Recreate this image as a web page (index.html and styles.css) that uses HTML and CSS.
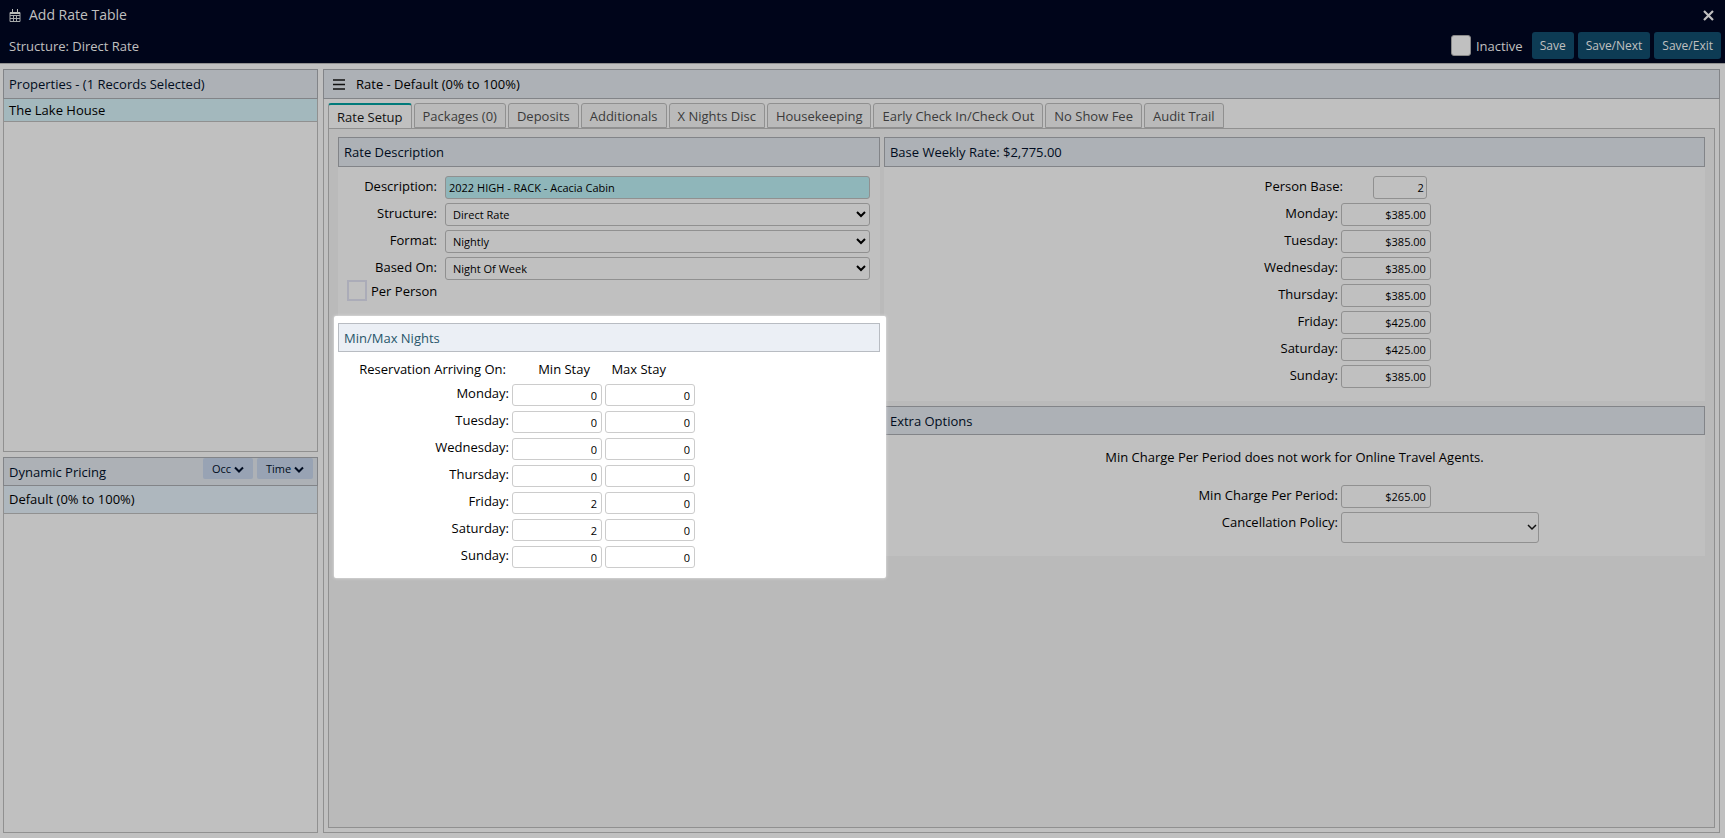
FILE: index.html
```html
<!DOCTYPE html>
<html lang="en">
<head>
  <meta charset="UTF-8">
  <title>Add Rate Table</title>
  <link rel="stylesheet" href="styles.css">
</head>
<body>

  <header class="topbar">
    <div class="title-row">
      <svg class="calendar" viewBox="0 0 12 13" width="12" height="13">
        <path d="M1 3.500h10v9h-10z M1 6.500h10 M1 9.500h10 M4.500 6v6.500 M7.500 6v6.500" fill="none" stroke="#a4a8a8" stroke-width="1"/>
        <path d="M1 3h10v2h-10z M3 0h1v4h-1z M8 0h1v4h-1z" fill="#b8bbb8"/>
      </svg>
      <h1>Add Rate Table</h1>
      <button class="close" aria-label="Close">
        <svg viewBox="0 0 11 11" width="11" height="11"><path d="M1 1l9 9M10 1l-9 9" stroke="#c0c0c0" stroke-width="2.200"/></svg>
      </button>
    </div>
    <div class="action-row">
      <span class="structure">Structure: Direct Rate</span>
      <label class="inactive"><input type="checkbox"> Inactive</label>
      <button class="save">Save</button>
      <button class="save">Save/Next</button>
      <button class="save">Save/Exit</button>
    </div>
  </header>

  <main class="layout">
    <aside class="sidebar">
      <section class="panel properties">
        <h2 class="bar">Properties - (1 Records Selected)</h2>
        <div class="item selected">The Lake House</div>
      </section>
      <section class="panel pricing">
        <h2 class="bar">Dynamic Pricing
          <span class="bar-buttons">
            <button>Occ <svg viewBox="0 0 10 7" width="10" height="7"><path d="M1 1.500l4 4l4-4" fill="none" stroke="#000c20" stroke-width="2"/></svg></button>
            <button>Time <svg viewBox="0 0 10 7" width="10" height="7"><path d="M1 1.500l4 4l4-4" fill="none" stroke="#000c20" stroke-width="2"/></svg></button>
          </span>
        </h2>
        <div class="item default">Default (0% to 100%)</div>
      </section>
    </aside>

    <section class="panel rate">
      <h2 class="bar">
        <svg class="menu" viewBox="0 0 12 11" width="12" height="11"><path d="M0 1h12M0 5.500h12M0 10h12" stroke="#111" stroke-width="1.600"/></svg>
        Rate - Default (0% to 100%)
      </h2>

      <nav class="tabs">
        <button class="active">Rate Setup</button>
        <button>Packages (0)</button>
        <button>Deposits</button>
        <button>Additionals</button>
        <button>X Nights Disc</button>
        <button>Housekeeping</button>
        <button>Early Check In/Check Out</button>
        <button>No Show Fee</button>
        <button>Audit Trail</button>
      </nav>

      <div class="tab-content">
        <div class="column">
          <section class="box description">
            <h3 class="bar">Rate Description</h3>
            <div class="form">
              <div class="row">
                <label for="description">Description:</label>
                <input class="filled" id="description" type="text" value="2022 HIGH - RACK - Acacia Cabin">
              </div>
              <div class="row">
                <label for="structure">Structure:</label>
                <select id="structure"><option>Direct Rate</option></select>
              </div>
              <div class="row">
                <label for="format">Format:</label>
                <select id="format"><option>Nightly</option></select>
              </div>
              <div class="row">
                <label for="based">Based On:</label>
                <select id="based"><option>Night Of Week</option></select>
              </div>
              <label class="per-person"><input type="checkbox"> Per Person</label>
            </div>
          </section>

          <div class="nights-wrap">
            <section class="nights">
              <h3 class="bar">Min/Max Nights</h3>
              <table>
                <thead>
                  <tr><th>Reservation Arriving On:</th><th>Min Stay</th><th>Max Stay</th></tr>
                </thead>
                <tbody>
                  <tr><th>Monday:</th><td><input type="text" aria-label="Monday min" value="0"></td><td><input type="text" aria-label="Monday max" value="0"></td></tr>
                  <tr><th>Tuesday:</th><td><input type="text" aria-label="Tuesday min" value="0"></td><td><input type="text" aria-label="Tuesday max" value="0"></td></tr>
                  <tr><th>Wednesday:</th><td><input type="text" aria-label="Wednesday min" value="0"></td><td><input type="text" aria-label="Wednesday max" value="0"></td></tr>
                  <tr><th>Thursday:</th><td><input type="text" aria-label="Thursday min" value="0"></td><td><input type="text" aria-label="Thursday max" value="0"></td></tr>
                  <tr><th>Friday:</th><td><input type="text" aria-label="Friday min" value="2"></td><td><input type="text" aria-label="Friday max" value="0"></td></tr>
                  <tr><th>Saturday:</th><td><input type="text" aria-label="Saturday min" value="2"></td><td><input type="text" aria-label="Saturday max" value="0"></td></tr>
                  <tr><th>Sunday:</th><td><input type="text" aria-label="Sunday min" value="0"></td><td><input type="text" aria-label="Sunday max" value="0"></td></tr>
                </tbody>
              </table>
            </section>
          </div>
        </div>

        <div class="column">
          <section class="box base-rate">
            <h3 class="bar">Base Weekly Rate: $2,775.00</h3>
            <div class="form">
              <div class="row person"><label for="person">Person Base:</label><input id="person" type="text" value="2"></div>
              <div class="row"><label for="mon">Monday:</label><input id="mon" type="text" value="$385.00"></div>
              <div class="row"><label for="tue">Tuesday:</label><input id="tue" type="text" value="$385.00"></div>
              <div class="row"><label for="wed">Wednesday:</label><input id="wed" type="text" value="$385.00"></div>
              <div class="row"><label for="thu">Thursday:</label><input id="thu" type="text" value="$385.00"></div>
              <div class="row"><label for="fri">Friday:</label><input id="fri" type="text" value="$425.00"></div>
              <div class="row"><label for="sat">Saturday:</label><input id="sat" type="text" value="$425.00"></div>
              <div class="row"><label for="sun">Sunday:</label><input id="sun" type="text" value="$385.00"></div>
            </div>
          </section>

          <section class="box extra">
            <h3 class="bar">Extra Options</h3>
            <p>Min Charge Per Period does not work for Online Travel Agents.</p>
            <div class="form">
              <div class="row"><label for="charge">Min Charge Per Period:</label><input id="charge" type="text" value="$265.00"></div>
              <div class="row"><label for="policy">Cancellation Policy:</label><select id="policy"><option></option></select></div>
            </div>
          </section>
        </div>
      </div>
    </section>
  </main>

</body>
</html>
```
FILE: styles.css
```css
* {
  box-sizing: border-box;
}
body {
  margin: 0;
  min-height: 100vh;
  display: flex;
  flex-direction: column;
  background: #c0c0c0;
  color: #000;
  font-family: "Open Sans", sans-serif;
  font-size: 13px;
  line-height: 18px;
}
h1, h2, h3, p {
  margin: 0;
  font-size: 13px;
  font-weight: normal;
}
button, input, select {
  font-family: inherit;
  font-size: 11px;
  margin: 0;
}

/* top bar */
.topbar {
  background: #00051a;
  color: #c0c0c0;
  height: 64px;
  padding: 0 4px 0 9px;
  border-bottom: 1px solid #909090;
}
.title-row {
  display: flex;
  align-items: center;
  gap: 8px;
  height: 30px;
}
.title-row h1 {
  flex: 1;
  font-size: 14px;
}
.close {
  display: flex;
  padding: 0;
  margin-right: 7px;
  border: 0;
  background: none;
}
.action-row {
  display: flex;
  align-items: center;
  gap: 4px;
  height: 31px;
}
.structure {
  flex: 1;
}
.inactive {
  display: flex;
  align-items: center;
  gap: 5px;
  margin-right: 5px;
}
.inactive input {
  appearance: none;
  width: 20px;
  height: 21px;
  border: 1px solid #888;
  border-radius: 3px;
  background: #c0c0c0;
}
.save {
  height: 27px;
  padding: 0 8px;
  border: 0;
  border-radius: 3px;
  background: #0d3b54;
  color: #c0c0c0;
  font-size: 12px;
}

/* panels */
.layout {
  flex: 1;
  display: flex;
  gap: 5px;
  padding: 5px 5px 5px 3px;
}
.sidebar {
  flex: 0 0 315px;
  display: flex;
  flex-direction: column;
  gap: 5px;
}
.panel {
  display: flex;
  flex-direction: column;
  border: 1px solid #909090;
}
.properties {
  flex: 51 1 0;
}
.pricing {
  flex: 50 1 0;
}
.rate {
  flex: 1;
}
.bar {
  display: flex;
  align-items: center;
  height: 30px;
  padding: 0 5px;
  border: 1px solid #828488;
  background: #adb1b6;
  color: #000c20;
}
.panel > .bar {
  margin: -1px -1px 0;
}
.rate > .bar {
  gap: 11px;
  padding-left: 9px;
  color: #000;
}
.pricing > .bar {
  justify-content: space-between;
  height: 29px;
  padding-right: 4px;
}
.bar-buttons {
  display: flex;
  align-self: flex-start;
  gap: 4px;
}
.bar-buttons button {
  height: 21px;
  padding: 0 9px;
  border: 0;
  border-radius: 2px;
  background: #98a3b4;
  color: #000c20;
}
.item {
  padding: 2px 5px;
  border-bottom: 1px solid #909090;
}
.selected {
  background: #a3b8bd;
}
.default {
  padding: 4px 5px 5px;
  background: #aeb7be;
}

/* tabs */
.tabs {
  display: flex;
  gap: 2px;
  padding: 4px 4px 0;
}
.tabs button {
  height: 25px;
  padding: 0 8px;
  border: 1px solid #909090;
  border-radius: 3px 3px 0 0;
  background: #bababa;
  color: #3a3a3a;
  font-size: 13px;
}
.tabs .active {
  border-top: 2px solid #007a7a;
  border-bottom: 0;
  background: #c0c0c0;
  color: #111;
}
.tab-content {
  flex: 1;
  display: grid;
  grid-template-columns: 66fr 100fr;
  gap: 4px;
  margin: 0 4px 4px;
  padding: 8px 9px 0;
  border: 1px solid #909090;
  background: #bababa;
}
.column {
  display: flex;
  flex-direction: column;
}

/* forms */
.box {
  background: #c0c0c0;
}
.form {
  display: flex;
  flex-direction: column;
  gap: 4px;
  padding-top: 9px;
}
.row {
  display: flex;
  height: 23px;
}
.row label {
  padding-top: 1px;
  text-align: right;
}
.row input, .row select, .nights input {
  border: 1px solid #909090;
  border-radius: 3px;
  background-color: #c0c0c0;
  color: #000;
}
.description {
  height: 179px;
}
.description .row {
  gap: 8px;
  padding-right: 10px;
}
.description .row label {
  flex: 0 0 99px;
}
.description .row input, .description .row select {
  flex: 1;
  padding: 0 3px;
}
.description .row .filled {
  background: #8fb6ba;
}
.per-person {
  display: flex;
  align-items: center;
  gap: 4px;
  margin-top: -4px;
  padding-left: 9px;
}
.per-person input {
  appearance: none;
  width: 20px;
  height: 21px;
  border: 2px solid #abacb8;
}

/* highlighted section, spills slightly over the next column */
.nights-wrap {
  position: relative;
  margin: 0 -6px 0 -4px;
}
.nights {
  height: 262px;
  padding: 7px 6px 0 4px;
  border-radius: 2px;
  background: #fff;
  box-shadow: 0 0 3px #e8e8e8;
}
.nights .bar {
  height: 29px;
  border-color: #b8bcc2;
  background: #ebeff5;
  color: #28566b;
}
.nights table {
  margin-top: 8px;
  border-spacing: 0;
}
.nights th, .nights td {
  padding: 0 3px 5px 0;
  font-weight: normal;
  text-align: right;
  vertical-align: top;
}
.nights thead th {
  height: 24px;
  padding: 0 15px 0 0;
}
.nights thead th:first-child {
  width: 174px;
  padding-right: 6px;
}
.nights thead th:last-child {
  padding-right: 32px;
}
.nights td input {
  display: block;
  width: 90px;
  height: 22px;
  padding: 0 4px;
  border-color: #ccc;
  background: #fff;
  text-align: right;
}

.base-rate {
  height: 264px;
  margin-bottom: 5px;
}
.base-rate .row, .extra .row {
  gap: 3px;
}
.base-rate label, .extra label {
  width: 454px;
}
.base-rate .row input, .extra .row input {
  width: 90px;
  padding: 0 4px;
  text-align: right;
}
.base-rate .person {
  gap: 30px;
}
.base-rate .person label {
  width: 459px;
}
.base-rate .person input {
  width: 54px;
  padding: 0 2px;
}
.extra {
  height: 150px;
}
.extra .bar {
  height: 29px;
}
.extra p {
  padding-top: 13px;
  text-align: center;
}
.extra .form {
  padding-top: 19px;
}
.extra .row select {
  appearance: none;
  width: 198px;
  height: 31px;
  background-image: url("data:image/svg+xml,%3Csvg xmlns='http://www.w3.org/2000/svg' width='10' height='7'%3E%3Cpath d='M1 1l4 4l4-4' fill='none' stroke='%23111' stroke-width='1.500'/%3E%3C/svg%3E");
  background-repeat: no-repeat;
  background-position: right 1px center;
}
```
